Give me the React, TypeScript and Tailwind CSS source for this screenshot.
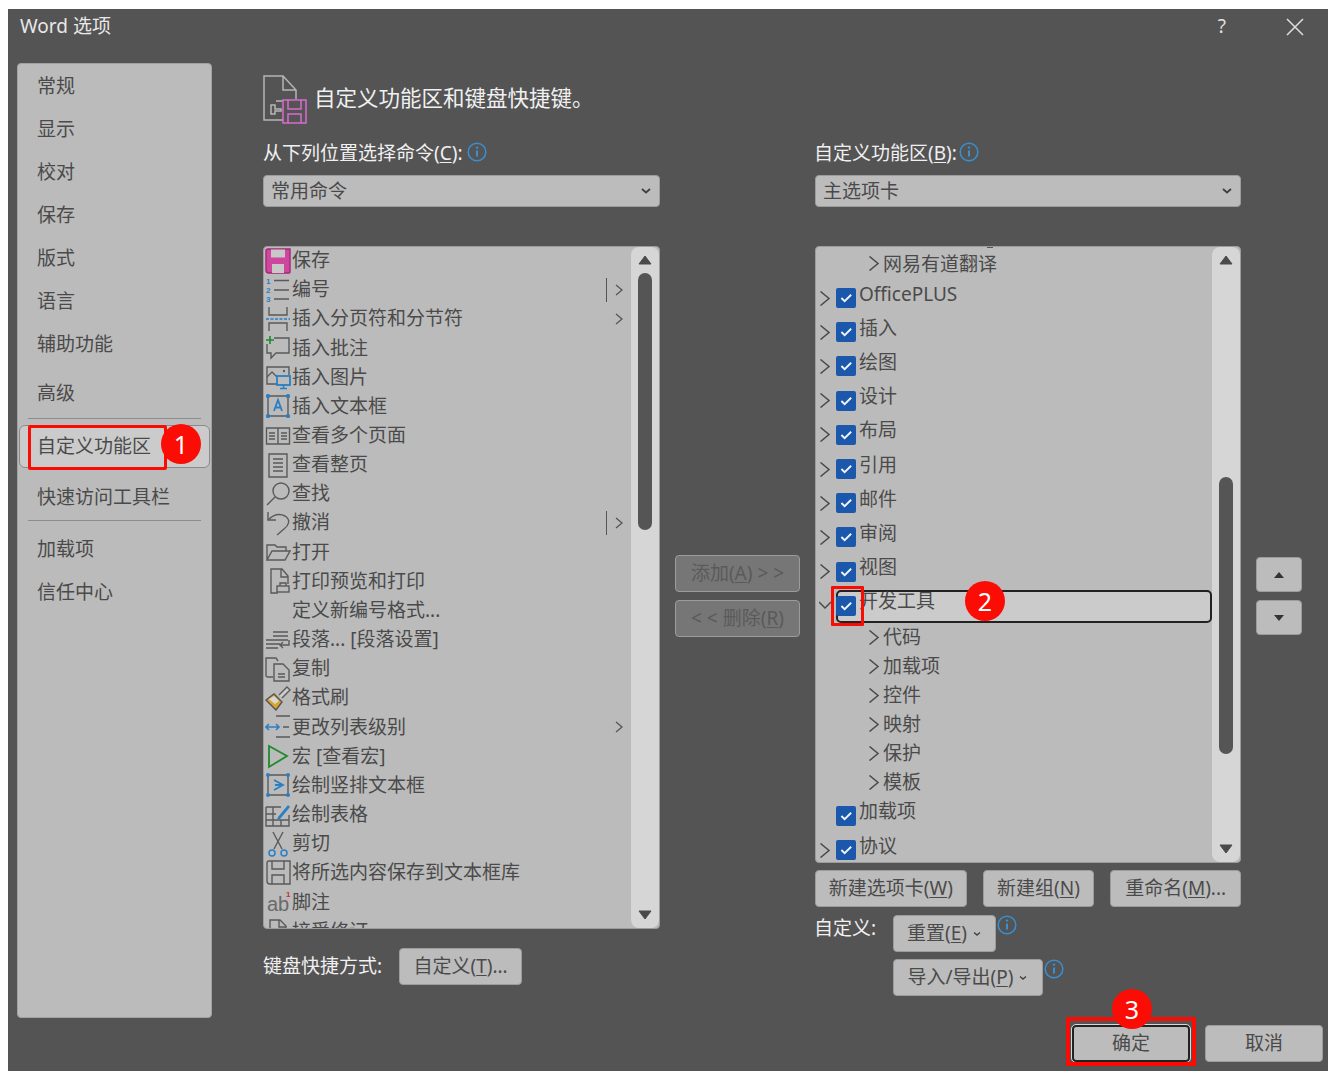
import type { ReactNode } from "react";

const L = "#5a5a5a";
const B = "#2a7fc4";

function Svg({ children }: { children: ReactNode }) {
  return (
    <svg viewBox="0 0 26 26" className="h-[26px] w-[26px] shrink-0" fill="none" stroke={L} strokeWidth="1.4">
      {children}
    </svg>
  );
}

const icons: Record<string, ReactNode> = {
  save: (
    <Svg>
      <path d="M1 3q0-2 2-2h22v23q0 1-1 1H4q-3 0-3-3z" fill="#cf469f" stroke="#a5267a" />
      <rect x="6" y="1.500" width="14" height="8" fill="#c8c8c8" stroke="none" />
      <rect x="7" y="16" width="12" height="9" fill="#c8c8c8" stroke="none" />
    </Svg>
  ),
  num: (
    <Svg>
      <path d="M9 3.500h15M9 13h15M9 22h15" />
      <g fill={B} stroke="none" fontSize="8" fontWeight="700" fontFamily="Liberation Sans">
        <text x="1" y="7">1</text>
        <text x="1" y="16">2</text>
        <text x="1" y="25">3</text>
      </g>
    </Svg>
  ),
  brk: (
    <Svg>
      <path d="M4 1v8h18V1M4 25v-8h18v8" />
      <path d="M1 13h24" stroke={B} strokeDasharray="3 1.500" />
    </Svg>
  ),
  note: (
    <Svg>
      <path d="M9 3h15v15H11l-5 5v-5H2V9" />
      <path d="M1 5h8M5 1v8" stroke="#1f8a2c" strokeWidth="1.600" />
    </Svg>
  ),
  pic: (
    <Svg>
      <path d="M12 20H2V3h22v8" />
      <path d="M2 13l5-5 5 5" />
      <circle cx="19" cy="7" r="1.200" fill={L} stroke="none" />
      <rect x="12" y="12" width="13" height="9" fill="#bbb" stroke={B} strokeWidth="1.800" />
      <path d="M18.500 21v3M15 24.500h7" stroke={B} strokeWidth="1.500" />
    </Svg>
  ),
  text: (
    <Svg>
      <path d="M3 3h20v20H3z" />
      <g fill={B} stroke="none">
        <rect x="1" y="1" width="4" height="4" rx="1.500" />
        <rect x="21" y="1" width="4" height="4" rx="1.500" />
        <rect x="1" y="21" width="4" height="4" rx="1.500" />
        <rect x="21" y="21" width="4" height="4" rx="1.500" />
      </g>
      <path d="M9 18l4-11 4 11M10.500 14.500h5" stroke={B} strokeWidth="1.800" />
    </Svg>
  ),
  multi: (
    <Svg>
      <path d="M1.500 5h23v16h-23zM13 5v16M4 10h6M4 13h6M4 16h6M16 10h6M16 13h6M16 16h6" />
    </Svg>
  ),
  page: (
    <Svg>
      <path d="M4 2h18v23H4zM8 7h10M8 11h10M8 15h10M8 19h10" />
    </Svg>
  ),
  find: (
    <Svg>
      <circle cx="16" cy="10" r="8" />
      <path d="M10 16L2 24" />
    </Svg>
  ),
  undo: (
    <Svg>
      <path d="M3 2v8h8" />
      <path d="M3 10c5-5 11-7 17-4 6 4 4 9-1 13l-7 6" />
    </Svg>
  ),
  open: (
    <Svg>
      <path d="M2 21V6h8l2 2h9v4M2 21h18l5-9H7z" />
    </Svg>
  ),
  print: (
    <Svg>
      <path d="M13 25H6V1h11l6 7v8M16 1v8h7" />
      <rect x="12" y="18" width="12" height="6" />
      <path d="M15 18v-3h6v3" />
    </Svg>
  ),
  para: (
    <Svg>
      <path d="M8 5h15M8 9h15M1 13h22M1 17h14M1 21h12M24 13v5H15M18 15l-3 3 3 3" />
    </Svg>
  ),
  copy: (
    <Svg>
      <path d="M8 21H3q-2 0-2-2V2h10l2 3" />
      <path d="M9 8h9l6 6v11H9z" />
      <path d="M13 18h7M13 21h7" />
    </Svg>
  ),
  brush: (
    <Svg>
      <path d="M1 15l8-6 8 8-6 8z" fill="#d9a531" stroke="#555" />
      <path d="M4 14l5-3 5 5-4 3z" fill="#d8d8d8" stroke="none" />
      <path d="M14 10l8-8 3 3-8 8" fill="#ccc" />
    </Svg>
  ),
  level: (
    <Svg>
      <path d="M1 13h13M4 10l-3 3 3 3M11 10l3 3-3 3" stroke={B} strokeWidth="1.600" />
      <path d="M11 2h14M18 13h6M11 23h14" />
    </Svg>
  ),
  macro: (
    <Svg>
      <path d="M4 3l18 10L4 24z" stroke="#1f8a2c" strokeWidth="1.800" />
    </Svg>
  ),
  vtext: (
    <Svg>
      <path d="M3 3h20v20H3z" />
      <g fill={B} stroke="none">
        <rect x="1" y="1" width="4" height="4" rx="2" />
        <rect x="21" y="1" width="4" height="4" rx="2" />
        <rect x="1" y="21" width="4" height="4" rx="2" />
        <rect x="21" y="21" width="4" height="4" rx="2" />
      </g>
      <path d="M9 8l9 5-9 5M10 13h6" stroke={B} strokeWidth="1.800" />
    </Svg>
  ),
  table: (
    <Svg>
      <path d="M1 5h15M1 5v19h23V13M1 12h10M1 18h23M8 5v19M16 18v6" />
      <path d="M13 15l10-12 2 2-10 12-3 1z" fill={B} stroke="none" />
    </Svg>
  ),
  cut: (
    <Svg>
      <path d="M8 1l9 17M18 1L9 18" />
      <circle cx="7" cy="22" r="3" stroke={B} strokeWidth="1.500" />
      <circle cx="19" cy="22" r="3" stroke={B} strokeWidth="1.500" />
    </Svg>
  ),
  saveline: (
    <Svg>
      <path d="M2 3q0-2 2-2h21v23H5q-3 0-3-3z" />
      <path d="M7 1v8h12V1M7 24v-9h12v9" />
    </Svg>
  ),
  foot: (
    <svg viewBox="0 0 26 26" className="h-[26px] w-[26px] shrink-0">
      <text x="2" y="22" fontSize="20" fontFamily="Liberation Sans" fill="#6a6a6a">ab</text>
      <text x="21" y="8" fontSize="8" fontWeight="700" fontFamily="Liberation Sans" fill="#c83030">1</text>
    </svg>
  ),
  accept: (
    <Svg>
      <path d="M5 24V2h10l6 6v16M14 2v7h7" />
    </Svg>
  ),
  none: <span className="h-[26px] w-[26px] shrink-0" />,
};

const commands: [string, string, string?][] = [
  ["save", "保存"],
  ["num", "编号", "bar"],
  ["brk", "插入分页符和分节符", "arrow"],
  ["note", "插入批注"],
  ["pic", "插入图片"],
  ["text", "插入文本框"],
  ["multi", "查看多个页面"],
  ["page", "查看整页"],
  ["find", "查找"],
  ["undo", "撤消", "bar"],
  ["open", "打开"],
  ["print", "打印预览和打印"],
  ["none", "定义新编号格式..."],
  ["para", "段落... [段落设置]"],
  ["copy", "复制"],
  ["brush", "格式刷"],
  ["level", "更改列表级别", "arrow"],
  ["macro", "宏 [查看宏]"],
  ["vtext", "绘制竖排文本框"],
  ["table", "绘制表格"],
  ["cut", "剪切"],
  ["saveline", "将所选内容保存到文本框库"],
  ["foot", "脚注"],
  ["accept", "接受修订"],
];

function Info() {
  return (
    <svg viewBox="0 0 20 20" className="h-[20px] w-[20px] shrink-0" fill="none">
      <circle cx="10" cy="10" r="8.800" stroke="#3a8fd0" strokeWidth="1.500" />
      <path d="M10 8.500v6" stroke="#3a8fd0" strokeWidth="2" />
      <circle cx="10" cy="5.600" r="1.200" fill="#3a8fd0" />
    </svg>
  );
}

function Chevron({ open = false }: { open?: boolean }) {
  return (
    <svg viewBox="0 0 12 15" className="h-[15px] w-[12px] shrink-0" fill="none" stroke="#4a4a4a" strokeWidth="1.500">
      {open ? <path d="M0 4l6 6 6-6" /> : <path d="M1.500 0.500L10 7.500l-8.500 7" />}
    </svg>
  );
}

function Caret({ className = "" }: { className?: string }) {
  return (
    <svg viewBox="0 0 10 6" className={`h-[6px] w-[10px] shrink-0 ${className}`} fill="none" stroke="#404040" strokeWidth="1.800">
      <path d="M1 1l4 3.500L9 1" />
    </svg>
  );
}

function Check() {
  return (
    <span className="grid h-[20px] w-[20px] shrink-0 place-items-center rounded-[2px] bg-[#1b57ab]">
      <svg viewBox="0 0 14 10" className="h-[10px] w-[13px]" fill="none" stroke="#f2f5fb" strokeWidth="2">
        <path d="M1.500 5l3.500 3.500L12 1.500" />
      </svg>
    </span>
  );
}

function Ul({ children }: { children: ReactNode }) {
  return <span className="underline underline-offset-2">{children}</span>;
}

function Btn({ className = "bg-[#bcbcbc] text-[#4a4a4a]", children }: { className?: string; children: ReactNode }) {
  return (
    <div className={`flex items-center justify-center whitespace-nowrap rounded-[4px] border border-[#9c9c9c] ${className}`}>
      {children}
    </div>
  );
}

function Select({ label }: { label: string }) {
  return (
    <div className="mt-[11px] flex h-[32px] items-center justify-between rounded-[4px] border border-[#9c9c9c] bg-[#bcbcbc] pl-[7px] pr-[8px] text-[#4a4a4a]">
      {label}
      <Caret />
    </div>
  );
}

function Tri({ up }: { up?: boolean }) {
  return (
    <svg viewBox="0 0 14 10" className="h-[10px] w-[14px]" fill="#4a4a4a" stroke="#4a4a4a" strokeLinejoin="round">
      {up ? <path d="M7 1l6 8H1z" /> : <path d="M1 1h12L7 9z" />}
    </svg>
  );
}

function Scrollbar({ before, thumb }: { before: number; thumb: number }) {
  return (
    <div className="flex w-[28px] shrink-0 flex-col items-center rounded-[8px] bg-[#d6d6d6] py-[8px]">
      <Tri up />
      <div className="w-[14px] flex-1">
        <div className="w-[14px] rounded-full bg-[#555555]" style={{ marginTop: before, height: thumb }} />
      </div>
      <Tri />
    </div>
  );
}

function MainTab({ label, open, selected }: { label: string; open?: boolean; selected?: boolean }) {
  return (
    <div className="relative flex h-[34.2px] shrink-0 items-center pl-[3px]">
      {selected && (
        <div className="absolute bottom-0 left-[20px] right-0 top-[1px] rounded-[5px] border-2 border-[#222222] bg-[#cbcbcb]" />
      )}
      <span className="relative flex items-center">
        <span className="w-[17px]"><Chevron open={open} /></span>
        <Check />
      </span>
      <span className="relative -mt-[8px] ml-[3px]">{label}</span>
    </div>
  );
}

function SubTab({ label }: { label: string }) {
  return (
    <div className="flex h-[29px] shrink-0 items-center gap-[3px] pl-[52px]">
      <Chevron />
      <span className="mt-px">{label}</span>
    </div>
  );
}

function NavItem({ children }: { children: ReactNode }) {
  return <div className="flex h-[43px] items-center pl-[19px] pt-[1px] text-[#4a4a4a]">{children}</div>;
}

function Badge({ n, className }: { n: number; className: string }) {
  return (
    <span className={`absolute z-10 grid h-[40px] w-[40px] place-items-center rounded-full bg-[#fb0d05] text-[25px] text-white ${className}`}>
      {n}
    </span>
  );
}

export default function App() {
  return (
    <div
      className="min-h-screen bg-white pl-[8px] pt-[9px] text-[19px] leading-none"
      style={{ fontFamily: '"Noto Sans", "Noto Sans CJK SC", sans-serif' }}
    >
      <div className="flex h-[1062px] w-[1320px] flex-col bg-[#545454] text-[#f0f0f0]">
        <div className="flex h-[54px] shrink-0 items-start justify-between pl-[12px] pr-[24px] pt-[6px]">
          <span className="leading-[22px] text-[#e8e8e8]">Word 选项</span>
          <div className="flex items-center gap-[60px] text-[#e0e0e0]">
            <span className="leading-[22px]">?</span>
            <svg viewBox="0 0 18 18" className="mt-[2px] h-[18px] w-[18px]" stroke="#e0e0e0" strokeWidth="1.500">
              <path d="M1 1l16 16M17 1L1 17" />
            </svg>
          </div>
        </div>

        <div className="flex h-[955px] shrink-0 pl-[9px]">
          <nav className="w-[195px] shrink-0 rounded-[4px] border border-[#a2a2a2] bg-[#bbbbbb]">
            <NavItem>常规</NavItem>
            <NavItem>显示</NavItem>
            <NavItem>校对</NavItem>
            <NavItem>保存</NavItem>
            <NavItem>版式</NavItem>
            <NavItem>语言</NavItem>
            <NavItem>辅助功能</NavItem>
            <div className="mt-[6px]"><NavItem>高级</NavItem></div>
            <div className="mx-[10px] mt-[4px] h-px bg-[#8c8c8c]" />
            <div className="relative mx-[1px] mt-[6px] flex h-[43px] items-center rounded-[6px] border border-[#8a8a8a] bg-[#cbcbcb] pl-[17px] text-[#4a4a4a]">
              自定义功能区
              <span className="absolute left-[8px] top-[-1px] h-[45px] w-[139px] rounded-[2px] border-[3px] border-[#f80c04]" />
              <Badge n={1} className="left-[141px] top-[-2px]" />
            </div>
            <div className="mt-[7px]"><NavItem>快速访问工具栏</NavItem></div>
            <div className="mx-[10px] mt-[2px] h-px bg-[#8c8c8c]" />
            <div className="mt-[6px]"><NavItem>加载项</NavItem></div>
            <NavItem>信任中心</NavItem>
          </nav>

          <section className="ml-[51px] w-[397px] shrink-0">
            <div className="flex h-[60px] items-start pt-[12px]">
              <svg viewBox="0 0 44 50" className="h-[50px] w-[44px] shrink-0" fill="none" stroke="#b5b5b5" strokeWidth="1.500">
                <path d="M20 45H1V1h19l13 14v9M20 1v14h13" />
                <path d="M18 34h-6v-4H8v9h4v-3h6zM13 26h8v8" />
                <path d="M20 25h23v23H20z" stroke="#d86bd0" fill="#545454" />
                <path d="M25 25v9h13v-9M25 48v-9h13v9" stroke="#d86bd0" />
              </svg>
              <h1 className="ml-[7px] mt-[11px] text-[21.500px] font-normal leading-[24px]">自定义功能区和键盘快捷键。</h1>
            </div>
            <div className="mt-[19px] flex h-[22px] items-center">
              <span>从下列位置选择命令(<Ul>C</Ul>):</span>
              <span className="ml-[4px] -mt-[3px]"><Info /></span>
            </div>
            <Select label="常用命令" />
            <div className="mt-[39px] flex h-[683px] overflow-hidden rounded-[4px] border border-[#9c9c9c] bg-[#bbbbbb] text-[#4a4a4a]">
              <div className="-mt-px min-w-0 flex-1">
                {commands.map(([icon, label, mark]) => (
                  <div key={label} className="flex h-[29.170px] items-center whitespace-nowrap pl-[1px] pr-[8px]">
                    {icons[icon]}
                    <span className="ml-px flex-1">{label}</span>
                    {mark === "bar" && <span className="mr-[8px] h-[24px] w-px bg-[#555555]" />}
                    {mark && (
                      <svg viewBox="0 0 8 12" className="h-[12px] w-[8px]" fill="none" stroke="#555555" strokeWidth="1.300">
                        <path d="M1 1l6 5-6 5" />
                      </svg>
                    )}
                  </div>
                ))}
              </div>
              <Scrollbar before={8} thumb={257} />
            </div>
            <div className="mt-[19px] flex h-[37px] items-center">
              <span>键盘快捷方式:</span>
              <Btn className="ml-[17px] h-[37px] w-[123px] bg-[#bcbcbc] text-[#4a4a4a]">自定义(<Ul>T</Ul>)...</Btn>
            </div>
          </section>

          <section className="ml-[15px] flex w-[125px] shrink-0 flex-col gap-[8px] pt-[492px]">
            <Btn className="h-[37px] border-[#6c6c6c] bg-[#767676] text-[#5a5a5a]">添加(<Ul>A</Ul>) &gt; &gt;</Btn>
            <Btn className="h-[37px] border-[#6c6c6c] bg-[#767676] text-[#5a5a5a]">&lt; &lt; 删除(<Ul>R</Ul>)</Btn>
          </section>

          <section className="ml-[15px] w-[426px] shrink-0 pt-[79px]">
            <div className="-ml-px flex h-[22px] items-center">
              <span>自定义功能区(<Ul>B</Ul>):</span>
              <span className="ml-[2px] -mt-[3px]"><Info /></span>
            </div>
            <Select label="主选项卡" />
            <div className="mt-[39px] flex h-[617px] overflow-hidden rounded-[4px] border border-[#9c9c9c] bg-[#bbbbbb] text-[#4a4a4a]">
              <div className="relative min-w-0 flex-1 pt-[2px]">
                <span className="absolute left-[171px] top-[-1px] h-[2px] w-[6px] bg-[#555555]" />
                <SubTab label="网易有道翻译" />
                <div className="mt-[3px]" />
                {["OfficePLUS", "插入", "绘图", "设计", "布局", "引用", "邮件", "审阅", "视图"].map((t) => (
                  <MainTab key={t} label={t} />
                ))}
                <MainTab label="开发工具" open selected />
                {["代码", "加载项", "控件", "映射", "保护", "模板"].map((t) => (
                  <SubTab key={t} label={t} />
                ))}
                <div className="mt-[2px]" />
                <div className="flex h-[34.2px] items-center pl-[20px]">
                  <Check />
                  <span className="-mt-[8px] ml-[3px]">加载项</span>
                </div>
                <MainTab label="协议" />
              </div>
              <Scrollbar before={212} thumb={277} />
            </div>
            <div className="mt-[7px] flex h-[37px] gap-[16px]">
              <Btn className="w-[152px] bg-[#bcbcbc] text-[#4a4a4a]">新建选项卡(<Ul>W</Ul>)</Btn>
              <Btn className="w-[112px] bg-[#bcbcbc] text-[#4a4a4a]">新建组(<Ul>N</Ul>)</Btn>
              <Btn className="w-[131px] bg-[#bcbcbc] text-[#4a4a4a]">重命名(<Ul>M</Ul>)...</Btn>
            </div>
            <div className="mt-[8px] flex">
              <span className="-ml-px mt-[2px] w-[79px] leading-[22px]">自定义:</span>
              <div className="flex flex-col gap-[7px]">
                <div className="flex items-start gap-[1px]">
                  <Btn className="h-[37px] w-[103px] gap-[5px] bg-[#bcbcbc] text-[#4a4a4a]">
                    <span>重置(<Ul>E</Ul>)</span>
                    <Caret className="scale-75" />
                  </Btn>
                  <Info />
                </div>
                <div className="flex items-start gap-[1px]">
                  <Btn className="h-[37px] w-[150px] gap-[5px] bg-[#bcbcbc] text-[#4a4a4a]">
                    <span>导入/导出(<Ul>P</Ul>)</span>
                    <Caret className="scale-75" />
                  </Btn>
                  <Info />
                </div>
              </div>
            </div>
          </section>

          <section className="ml-[15px] flex w-[46px] shrink-0 flex-col gap-[8px] pt-[494px]">
            <Btn className="h-[35px] bg-[#bcbcbc]"><svg viewBox="0 0 10 6" className="h-[6px] w-[10px]" fill="#333333"><path d="M5 0l5 6H0z" /></svg></Btn>
            <Btn className="h-[35px] bg-[#bcbcbc]"><svg viewBox="0 0 10 6" className="h-[6px] w-[10px]" fill="#333333"><path d="M0 0h10L5 6z" /></svg></Btn>
          </section>
        </div>

        <div className="mt-[7px] flex justify-end gap-[15px] pr-[5px]">
          <div className="relative">
            <Btn className="h-[37px] w-[118px] border-2 border-[#222222] bg-[#bcbcbc] text-[#4a4a4a] outline outline-1 outline-[#d8d8d8]">确定</Btn>
            <span className="absolute -left-[6px] -top-[8px] h-[49px] w-[130px] border-[4px] border-[#f80c04]" />
            <Badge n={3} className="left-[40px] top-[-36px]" />
          </div>
          <Btn className="h-[37px] w-[118px] bg-[#bcbcbc] text-[#4a4a4a]">取消</Btn>
        </div>
      </div>

      {/* annotations over the tree row */}
      <span className="absolute left-[831px] top-[586px] h-[40px] w-[33px] rounded-[1px] border-[3px] border-[#f80c04]" />
      <Badge n={2} className="left-[965px] top-[581px]" />
    </div>
  );
}
